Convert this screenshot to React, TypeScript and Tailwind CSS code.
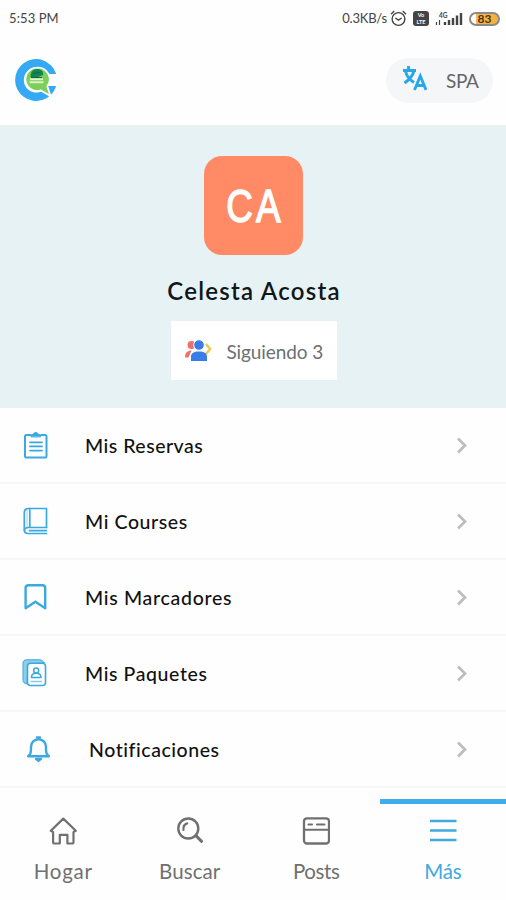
import type { ReactNode } from "react";
import { useState } from "react";

const menuItems = [
  { label: "Mis Reservas", icon: <ClipboardIcon />, spacing: "pl-[22px]", text: "tracking-[0.5px]" },
  { label: "Mi Courses", icon: <BookIcon />, spacing: "pl-[22px]", text: "tracking-[0.6px]" },
  { label: "Mis Marcadores", icon: <BookmarkIcon />, spacing: "pl-[22px]", text: "tracking-[0.7px]" },
  { label: "Mis Paquetes", icon: <PackageIcon />, spacing: "pl-[22px]", text: "tracking-[0.6px]" },
  { label: "Notificaciones", icon: <BellIcon />, spacing: "pl-[26px]", text: "tracking-[0.55px]" },
];

const tabs = [
  { label: "Hogar", icon: <HomeIcon />, text: "tracking-[0.8px]" },
  { label: "Buscar", icon: <SearchIcon />, text: "tracking-[0.1px]" },
  { label: "Posts", icon: <PostsIcon />, text: "tracking-[-0.4px]" },
  { label: "Más", icon: <MenuIcon />, text: "tracking-[-0.2px]" },
];

function Icon({ children }: { children: ReactNode }) {
  return (
    <svg
      className="h-7 w-7 shrink-0"
      viewBox="0 0 28 28"
      fill="none"
      stroke="currentColor"
      strokeWidth="2"
      strokeLinecap="round"
      strokeLinejoin="round"
    >
      {children}
    </svg>
  );
}

function ClipboardIcon() {
  return (
    <Icon>
      <path d="M8.3 4H4.2A1.2 1.2 0 0 0 3 5.2v20.1a1.2 1.2 0 0 0 1.2 1.2h19.1a1.2 1.2 0 0 0 1.2-1.2V5.2A1.2 1.2 0 0 0 23.3 4h-4.1" />
      <path d="M9 5.5V4l2.3-.8a2.6 2.6 0 0 1 4.9 0l2.3.8v1.5z" fill="currentColor" strokeWidth="1" />
      <path d="M8 11.3h12M8 15.4h12M8 19.6h12" strokeWidth="1.8" />
    </Icon>
  );
}

function BookIcon() {
  return (
    <Icon>
      <g strokeWidth="1.7">
        <path d="M24.5 20.5v-19H6.5c-2.4 0-4.2 1.4-4.2 3.8v17.2c0 2.5 1.6 4 3.7 4h18.5" />
        <path d="M7.8 1.5v19M24.5 20.5H6.5c-2.2 0-3.9 1-4.2 3M7.5 23.6h17" />
        <path d="M5 2.5v18.5" strokeWidth="1" opacity=".5" />
      </g>
    </Icon>
  );
}

function BookmarkIcon() {
  return (
    <Icon>
      <path d="M6 2.2h14.5a2.7 2.7 0 0 1 2.7 2.7v20.3l-9.8-6.5-9.8 6.5V4.9A2.7 2.7 0 0 1 6 2.2z" strokeWidth="2.4" />
    </Icon>
  );
}

function PackageIcon() {
  return (
    <Icon>
      <path d="M4.5 24.8C2.3 24.6 1 23.3 1 21.3V4c0-2 1.4-3.2 3.5-3.2h13c2 0 3.8 1.2 5 3.2L6.5 5z" fill="#8fcdec" strokeWidth="1" />
      <rect x="5.5" y="4.3" width="18" height="22.2" rx="3" fill="white" strokeWidth="1.6" />
      <circle cx="14.2" cy="11.5" r="2.5" strokeWidth="1.5" />
      <path d="M9.4 18.5c0-3 2-4.2 4.8-4.2s4.8 1.2 4.8 4.2z" strokeWidth="1.5" />
      <path d="M9 22.5h10.5" strokeWidth="1.3" opacity=".6" />
    </Icon>
  );
}

function BellIcon() {
  return (
    <Icon>
      <path
        d="M4 19.3c1.2-1.7 1-4.6 1-7.6a7.5 7.5 0 0 1 15 0c0 3-.2 5.9 1 7.6.5.8 1.2 1 1.9 2H2.1c.7-1 1.4-1.2 1.9-2z"
        strokeWidth="2.4"
      />
      <path d="M10 23.9h5l-2.5 2zM11 2.5h3" strokeWidth="2.4" />
    </Icon>
  );
}

function HomeIcon() {
  return (
    <Icon>
      <path d="M1.8 13.8 14.3 1.6l12.5 12.2-2.3 1.1v10.3c0 .9-.6 1.3-1.5 1.3h-4.6v-8.7h-7.6v8.7H5.6c-.9 0-1.5-.4-1.5-1.3V14.9z" strokeWidth="2.2" />
    </Icon>
  );
}

function SearchIcon() {
  return (
    <Icon>
      <circle cx="12.3" cy="11.5" r="10" strokeWidth="2.4" />
      <path d="m19.8 18.7 5.8 5.6" strokeWidth="3" />
      <path d="M7.5 13c-.5-3.3.8-5.6 3.7-6.6" strokeWidth="2.2" />
    </Icon>
  );
}

function PostsIcon() {
  return (
    <Icon>
      <rect x="2" y="1.3" width="25" height="25.2" rx="3" strokeWidth="2.3" />
      <path d="M2.5 12.7h24.5M6.5 7.5h3.5M15 7.5h7.5" strokeWidth="2.1" />
    </Icon>
  );
}

function MenuIcon() {
  return (
    <Icon>
      <path d="M1 4h26.5M1 13.5h26.5M1 23h26.5" strokeWidth="2.7" strokeLinecap="butt" />
    </Icon>
  );
}

function Logo() {
  return (
    <svg className="h-[42px] w-[42px]" viewBox="0 0 42 42">
      <path d="M41.2 15H32.5A12.6 12.6 0 1 0 32.5 27H41.2A21 21 0 1 1 41.2 15Z" fill="#36a9f4" />
      <path
        d="M22 8.6a11.7 11.7 0 1 0 3.8 22.8L35.5 37l-3.2-9.7A11.7 11.7 0 0 0 22 8.6Z"
        fill="#7dce5b"
        stroke="white"
        strokeWidth="1.8"
      />
      <path d="M15.5 18c0-5 2-8 6.5-8s6.5 2.5 6 6l-5 2z" fill="#128553" />
      <path d="m18 14.5 7-1M16 18.5h11" stroke="#086b46" strokeWidth="1.2" />
      <path d="M15 20.3h13M14.5 23.3h14" stroke="#ddf2c5" strokeWidth="2" />
    </svg>
  );
}

function StatusBar() {
  return (
    <div className="flex h-9 items-center justify-between pl-[9px] pr-[6px] pt-px text-[#444]">
      <span className="text-[13px] tracking-[0.1px]">5:53 PM</span>
      <div className="flex items-center">
        <span className="mr-[3px] text-[13px] tracking-[-0.2px]">0.3KB/s</span>
        <svg className="mr-[6px] h-[17px] w-[17px]" viewBox="0 0 16 16" fill="none" stroke="currentColor" strokeWidth="1.3">
          <circle cx="8" cy="8.5" r="6" />
          <path d="m1 4 3-3m8 0 3 3M5 7.5l3 2 3-2" />
        </svg>
        <div className="mr-[6px] flex h-[15px] w-[16px] flex-col items-center justify-center rounded-[3px] bg-[#444] text-[5.5px] font-bold leading-[7px] text-white">
          <span>Vo</span>
          <span>LTE</span>
        </div>
        <svg className="mr-[6px] h-4 w-[28px]" viewBox="0 0 28 16">
          <path d="M1.5 14v-3M4.5 14V9" stroke="currentColor" strokeWidth="1.2" />
          <path d="M10 14v-3M14 14V9M18 14V7M22 14V4.5M26 14V2" stroke="currentColor" strokeWidth="2.4" />
          <text x="4" y="7" fontSize="6.5" fontWeight="bold" fill="currentColor">4G</text>
        </svg>
        <div className="flex h-[14px] w-[31px] items-center justify-center rounded-full border-2 border-[#8a8a8a] bg-gradient-to-r from-white from-20% via-[#f5b64f] via-20% to-[#f7af38] text-[12px] font-bold leading-none text-[#493516]">
          83
        </div>
      </div>
    </div>
  );
}

export default function App() {
  const [activeTab, setActiveTab] = useState("Más");

  return (
    <main className="flex h-[900px] w-[506px] flex-col overflow-hidden bg-[#fefefe] font-['Lato',sans-serif]">
      <StatusBar />

      <header className="flex h-[90px] shrink-0 items-center justify-between border-b border-[#edf1f2] pb-px pl-[15px] pr-[13px]">
        <Logo />
        <button className="flex h-[45px] w-[107px] items-center rounded-full bg-[#f4f6f8] pl-[16px]">
          <svg className="mb-1 h-[27px] w-[25px]" viewBox="0 0 25 27" fill="none" stroke="#29a7eb" strokeWidth="2.9">
            <path d="M1 5.5h13M6.5 1v4.5M3.5 6C4.5 11 8 15 12 17.5M12 6C10.5 11 7 15 2.5 18" />
            <path d="m12.5 25 5.8-14 5.7 14M14.5 20.5h7.5" />
          </svg>
          <span className="ml-[19px] mt-[3px] text-[19px] tracking-[-0.4px] text-[#666]">SPA</span>
        </button>
      </header>

      <section className="flex h-[282px] shrink-0 flex-col items-center bg-[#e7f2f4] pt-[30px]">
        <div className="flex h-[99px] w-[99px] items-center justify-center rounded-[18px] bg-[#ff8a65] font-['Liberation_Sans',sans-serif] text-[46px] leading-none tracking-[4px] text-white">
          <span className="origin-center translate-x-[2px] scale-x-[0.8] [-webkit-text-stroke:1.5px_white]">CA</span>
        </div>
        <h1 className="ml-[2px] mt-[19px] whitespace-nowrap text-[24px] font-semibold leading-[34px] tracking-[1.25px] text-[#101618]">
          Celesta Acosta
        </h1>
        <button className="ml-px mt-[13px] flex h-[59px] w-[166px] items-center bg-white pl-[14px]">
          <svg className="h-6 w-[27px] shrink-0" viewBox="0 0 27 24">
            <circle cx="6.5" cy="6" r="3.9" fill="#ef7069" />
            <path d="M0 18.5c0-5 2.5-7 6.5-7l-3 7z" fill="#ef7069" />
            <path d="m21 5 4.2 5-4.2 5" fill="none" stroke="#edc84b" strokeWidth="2.4" />
            <circle cx="14" cy="6" r="5.3" fill="#397de8" stroke="white" />
            <path d="M6 22v-4c0-4 3-5.5 8-5.5s8 1.5 8 5.5v4z" fill="#397de8" />
          </svg>
          <span className="ml-[15px] mt-[4px] whitespace-nowrap text-[19px] tracking-[-0.1px] text-[#6c7070]">
            Siguiendo 3
          </span>
        </button>
      </section>

      <div className="grid h-[380px] shrink-0 grid-rows-5">
        {menuItems.map((item) => (
          <button key={item.label} className={`flex items-center border-b-2 border-[#f7f7f7] pr-[38px] ${item.spacing}`}>
            <span className="text-[#3ba9df]">{item.icon}</span>
            <span className={`ml-[35px] mt-px flex-1 text-left text-[19.5px] font-medium leading-7 text-[#111] ${item.text}`}>
              {item.label}
            </span>
            <svg className="h-[17px] w-3" viewBox="0 0 12 17" fill="none" stroke="#bdbdbd" strokeWidth="2.7">
              <path d="m2 1.5 7 7-7 7" />
            </svg>
          </button>
        ))}
      </div>

      <nav className="grid flex-1 grid-cols-4 pt-[11px]">
        {tabs.map((tab) => (
          <button
            key={tab.label}
            onClick={() => setActiveTab(tab.label)}
            className={`flex flex-col items-center border-t-[5px] pt-[13px] ${
              activeTab === tab.label ? "border-[#41aceb] text-[#41a9dd]" : "border-transparent text-[#707070]"
            }`}
          >
            {tab.icon}
            <span className={`mt-[12px] text-[20.5px] leading-[28px] ${tab.text}`}>{tab.label}</span>
          </button>
        ))}
      </nav>
    </main>
  );
}
